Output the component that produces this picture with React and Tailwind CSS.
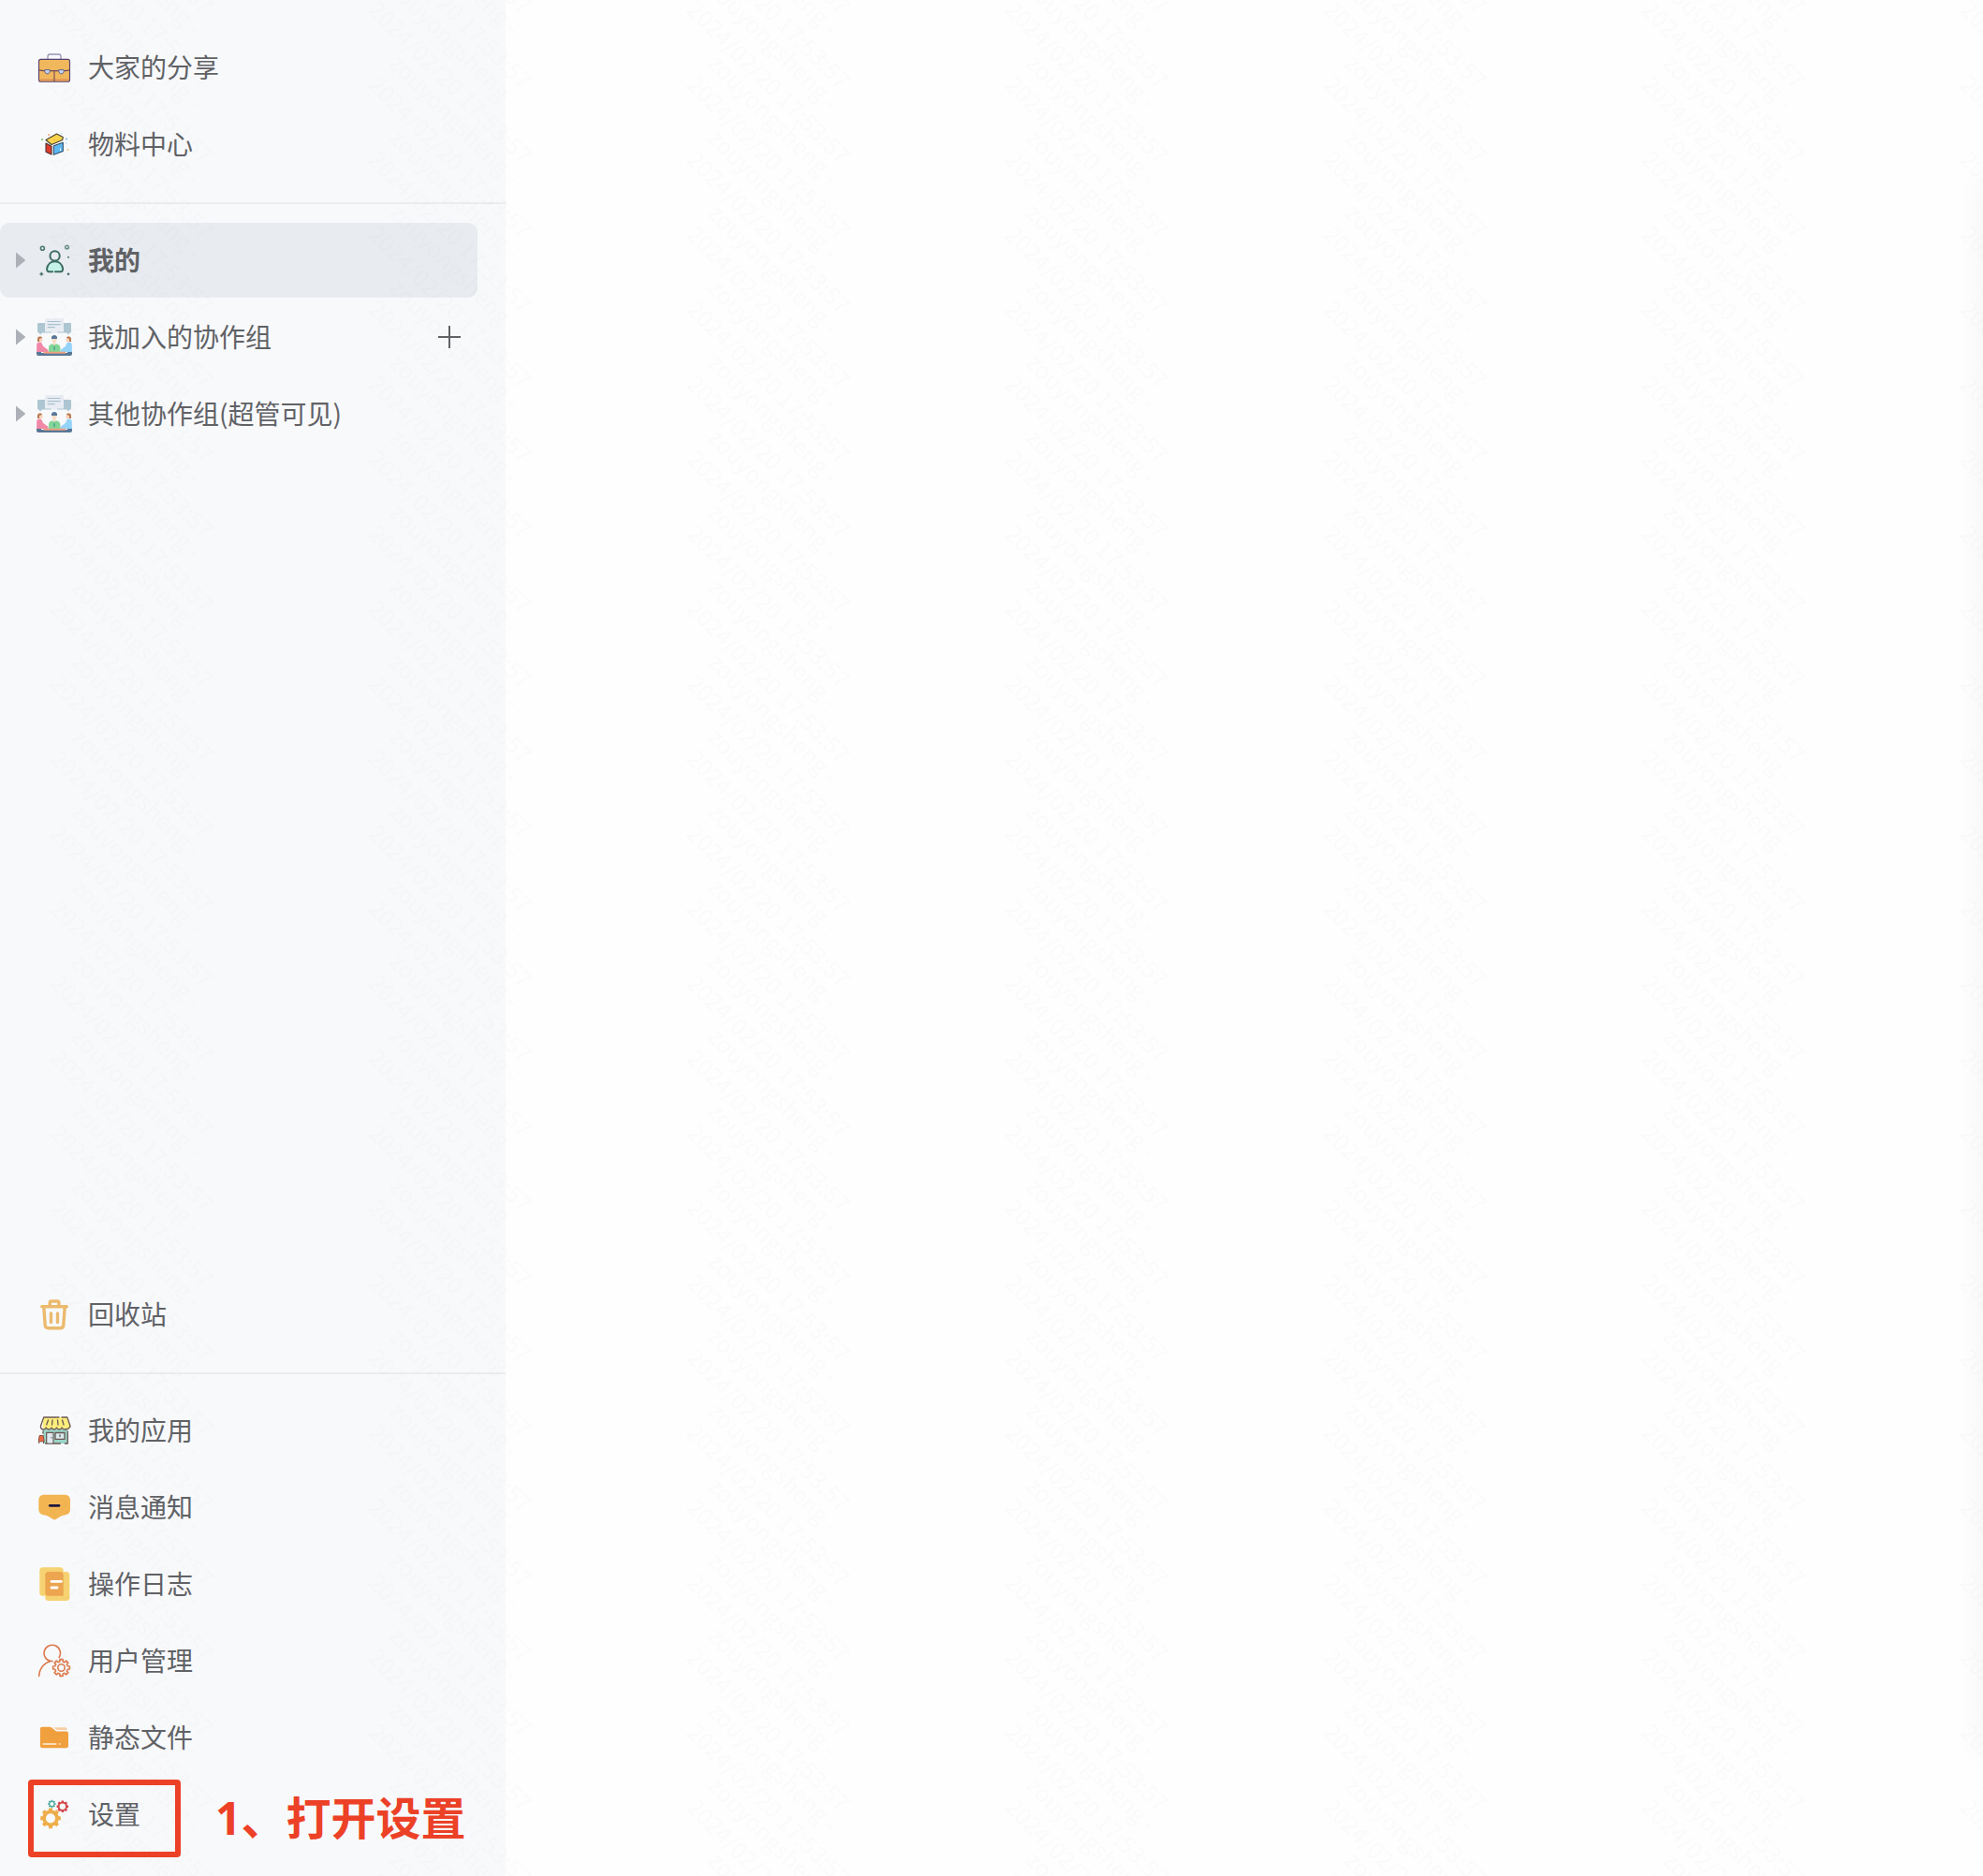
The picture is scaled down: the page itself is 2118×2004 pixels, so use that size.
import React from "react";

function gearPath(cx, cy, outer, inner, teeth) {
  const step = (Math.PI * 2) / teeth;
  const pts = [];
  for (let i = 0; i < teeth; i++) {
    const a = i * step - Math.PI / 2;
    [
      [inner, -0.32],
      [outer, -0.22],
      [outer, 0.22],
      [inner, 0.32],
    ].forEach(([r, k]) => {
      pts.push(`${(cx + r * Math.cos(a + k * step)).toFixed(2)} ${(cy + r * Math.sin(a + k * step)).toFixed(2)}`);
    });
  }
  return `M${pts.join("L")}Z`;
}

function ring(cx, cy, r) {
  return `M${cx - r} ${cy}a${r} ${r} 0 1 0 ${2 * r} 0a${r} ${r} 0 1 0 ${-2 * r} 0Z`;
}

function Icon({ children, shift = 0 }) {
  return (
    <svg viewBox={`0 ${-shift} 40 40`} className="size-10 shrink-0" fill="none" aria-hidden="true">
      {children}
    </svg>
  );
}

const Briefcase = () => (
  <Icon>
    <path d="M13 11V8.3a2.3 2.3 0 0 1 2.3-2.3h9.4a2.3 2.3 0 0 1 2.3 2.3V11" stroke="#9a92b8" strokeWidth="1.3" />
    <rect x="3.5" y="11.4" width="33" height="23.8" rx="2" fill="#f1b75c" stroke="#54406f" strokeWidth="1.1" />
    <path d="M4.3 33.4h31.4" stroke="#e08f56" strokeWidth="1.6" />
    <path d="M3.5 22.8c2 .8 4 .8 6 .8h21c2 0 4 0 6-.8M20 23.6V35" stroke="#6d4a5c" strokeWidth="1.1" />
    <path d="M9.8 22.6h5.4v2.2l-1.5 2h-2.4l-1.5-2ZM24.8 22.6h5.4v2.2l-1.5 2h-2.4l-1.5-2Z" fill="#c3d3ee" stroke="#5d5b82" strokeWidth=".9" />
  </Icon>
);

const Cube = () => (
  <Icon>
    <path d="M11 15.5 22.5 9l6.8 3.4-.6 3.2L17 20.5Z" fill="#f8d34c" stroke="#4a4030" strokeWidth="1.1" strokeLinejoin="round" />
    <path d="m11 19 6 3.2v8.8l-6-2.8Z" fill="#e23b2c" stroke="#4a3030" strokeWidth="1.1" strokeLinejoin="round" />
    <path d="m19.3 21.8 10-3.6v9.4l-10 3.6Z" fill="#5cb8f3" stroke="#34506a" strokeWidth="1.1" strokeLinejoin="round" />
    <path d="M26.5 24.5v2.5" stroke="#fff" strokeWidth="1" />
    <path d="M20 15v1" stroke="#d49a28" strokeWidth=".8" />
    <circle cx="7" cy="15" r="1" fill="#6fbf6a" />
    <circle cx="14.2" cy="10" r=".9" fill="#f0946a" />
    <circle cx="27.5" cy="8.8" r=".6" fill="#7fcf8a" />
    <circle cx="33" cy="14.5" r="1" fill="#7db9ee" />
    <circle cx="32.6" cy="19" r=".6" fill="#7db9ee" />
    <circle cx="34.5" cy="26" r="1" fill="#f5c070" />
    <circle cx="6.3" cy="24.5" r=".6" fill="#f3d98a" />
  </Icon>
);

const Mine = () => (
  <Icon>
    <path d="M14.5 32.2c-1.6 0-2.6-1.2-2.4-3 .6-4.8 4-8 8.5-8s7.9 3.2 8.5 8c.2 1.8-.8 3-2.400 3Z" fill="#c5f2e6" />
    <path d="M15.5 32.2h-1c-1.600 0-2.600-1.200-2.400-3 .6-4.800 4-8 8.500-8s7.900 3.200 8.500 8c.2 1.800-.8 3-2.400 3h-5.700M17 32.200h1.200" stroke="#3c6b62" strokeWidth="2" strokeLinecap="round" />
    <circle cx="20.6" cy="15.4" r="5.1" fill="#e8ebf0" stroke="#3c6b62" strokeWidth="2" />
    <circle cx="7.4" cy="7.3" r="2" stroke="#4b766e" strokeWidth="1.6" />
    <circle cx="33.5" cy="6" r="1.8" stroke="#6c8f89" strokeWidth="1.6" />
    <circle cx="35" cy="16.8" r="1" fill="#4b766e" />
    <path d="M6.3 32.800v3.800M4.400 34.700h3.800" stroke="#4b766e" strokeWidth="1.6" />
    <circle cx="35" cy="34.7" r="1.3" fill="#3c6b62" />
  </Icon>
);

const Team = () => (
  <Icon>
    <path d="M3 5h14v10.500H7L5 17.500l-1.500-2H3a1 1 0 0 1-1-1V6a1 1 0 0 1 1-1ZM23 5h14a1 1 0 0 1 1 1v8.500a1 1 0 0 1-1 1h-.5l-1.500 2-2-2H23Z" fill="#adc6d2" />
    <path d="M10 0h20v14.500h-6.500L20 16.500l-3.500-2H10Z" fill="#e9edf3" />
    <path d="M12.700 3.500h14M12.700 6.600h14M12.700 9.600h8" stroke="#a8c2cf" strokeWidth="1.1" />
    <path d="M1 35.500h38v2.500a2 2 0 0 1-2 2H3a2 2 0 0 1-2-2Z" fill="#587896" />
    <path d="M6 34h28v3H6Z" fill="#f6f8fb" />
    <path d="M1.200 36v-7.500c0-2 1.300-3 3-3 2 0 3 1.500 3.500 4l5.800 4.500v2H5Z" fill="#f088a8" />
    <path d="M38.800 36v-7.500c0-2-1.300-3-3-3-2 0-3 1.500-3.500 4L26.500 34v2H35Z" fill="#94d3f8" />
    <path d="M14 36v-4.500c0-2.500 2-4 4-4h4c2 0 4.400 1.500 4.400 4V36Z" fill="#82d596" />
    <path d="m20 28.500 1 3.500-1 3-1-3Z" fill="#4fa58e" />
    <path d="M8.500 35.700h23.500v2H8.500Z" fill="#f0a283" />
    <circle cx="5" cy="23" r="2.5" fill="#f9d2ba" />
    <circle cx="35" cy="23" r="2.5" fill="#f9d2ba" />
    <path d="M2 25v-3c0-2 1.500-2.500 3-2.500 1.200 0 2 .5 2 1.500l-3 1v3ZM38 25v-3c0-2-1.500-2.500-3-2.500-1.200 0-2 .5-2 1.500l3 1v3Z" fill="#b97a50" />
    <path d="M17.500 20.500h5v4l-1.300 1.500v2L20 29l-1.200-1v-2l-1.300-1.500Z" fill="#fbdcc4" />
    <path d="M17 22v-1.500c0-1.500 1.500-2.500 3-2.500s3 1 3 2.500V22Z" fill="#58789a" />
  </Icon>
);

const Trash = () => (
  <Icon>
    <g stroke="#ebba6d" strokeWidth="3.4" strokeLinecap="round" strokeLinejoin="round">
      <path d="M6.800 11.700h26.500" />
      <path d="M15.200 11V7.600A1.700 1.700 0 0 1 16.900 6h6.300A1.700 1.700 0 0 1 24.900 7.600V11" />
      <path d="m8.800 12 1.400 19.500a3.500 3.500 0 0 0 3.500 3.200h12.600a3.500 3.500 0 0 0 3.500-3.200L31.200 12" />
      <path d="M16.500 19v9.500M23.500 19v9.500" />
    </g>
  </Icon>
);

const Shop = () => (
  <Icon shift={1}>
    <path d="M8 18h26v15H8Z" fill="#9ad6c7" />
    <path d="M8.600 5h25.200l3.300 9.500c0 2.500-1.400 3.500-2.800 3.500s-2.400-.8-2.800-1.800c-.6 1.200-1.600 1.800-2.800 1.800s-2.200-.6-2.700-1.800c-.6 1.200-1.500 1.800-2.700 1.800s-2.200-.6-2.700-1.800c-.6 1.200-1.500 1.800-2.700 1.800s-2.200-.6-2.700-1.800c-.6 1.200-1.500 1.800-2.700 1.800-1.900 0-4.900-1-4.900-3.500Z" fill="#fbee7b" />
    <g stroke="#6b5653" strokeWidth="1.3" strokeLinecap="round" strokeLinejoin="round">
      <path d="M25 5H8.700L5.400 14.500c0 2.300 1.300 3.500 2.900 3.500s2.600-.8 3-2c.5 1.300 1.500 2 2.800 2s2.300-.7 2.800-2c.5 1.300 1.500 2 2.800 2s2.300-.7 2.800-2c.5 1.300 1.500 2 2.800 2s2.300-.7 2.800-2c.5 1.300 1.500 2 2.900 2 1.800 0 5-.8 6.100-3.500L33.800 5H28" />
      <path d="m13.500 8-1.800 5M18 8l-.5 5M23.500 8l.5 5M28.500 8l1.500 5" />
      <path d="M8 20v2M34.300 20v13h-3M11.700 33V21.500h7.200V33ZM10.500 33h16" />
      <path d="M21 21.500h10v6.800H21Z" fill="#d9ecee" />
      <path d="M26 24v1.500" />
    </g>
    <path d="M12.500 22h5.800v10.500h-5.800Z" fill="#e3e9f0" />
    <path d="M17 26v1.500" stroke="#6b5653" strokeWidth="1" />
    <path d="M4.200 24.500h4l1 6.300h-6Z" fill="#ea6c45" stroke="#8b4c3e" strokeWidth="1" strokeLinejoin="round" />
    <path d="M3.700 31v2M8.500 31v2" stroke="#6b5653" strokeWidth="1.1" />
  </Icon>
);

const Message = () => (
  <Icon shift={1}>
    <path d="M9 5.700h22c4 0 6 2.500 6 6v9.300c0 3.500-1.500 5.500-5 6.300-2.500.5-4 .7-6 2l-4 2.500c-1.300.8-2.300.8-3.600 0l-4-2.500c-2-1.300-3.500-1.500-6-2-3.500-.8-5.100-2.800-5.100-6.300v-9.300c0-3.500 2-6 5.700-6Z" fill="#f2b552" />
    <path d="M15.300 17.300h9.700" stroke="#1e173f" strokeWidth="2.7" strokeLinecap="round" />
  </Icon>
);

const Log = () => (
  <Icon shift={1}>
    <rect x="4.3" y="1.3" width="25.4" height="30.4" rx="3.5" fill="#f7d272" />
    <rect x="10.3" y="6" width="26" height="31" rx="3.5" fill="#f7d272" />
    <path d="M13.800 6h12.400a3.500 3.500 0 0 1 3.500 3.500v22.200H13.800a3.500 3.500 0 0 1-3.500-3.500V9.500A3.500 3.500 0 0 1 13.800 6Z" fill="#eda550" />
    <path d="M17 16.300h10.500M17 23h6" stroke="#fff" strokeWidth="2.8" strokeLinecap="round" />
  </Icon>
);

const UserGear = () => (
  <Icon shift={1}>
    <g stroke="#dc7a4c" strokeWidth="1.6" strokeLinecap="round" strokeLinejoin="round">
      <path d="M25.200 15.500a8.700 8.700 0 1 0-9.200 4C9 21.500 3.900 27.500 3.700 35.500M16 19.500h2" />
      <path d={gearPath(27.5, 26.5, 9, 6.8, 8)} />
      <circle cx="27.5" cy="26.5" r="3.7" />
    </g>
  </Icon>
);

const Folder = () => (
  <Icon shift={1}>
    <path d="M19 8.200h12a2.500 2.500 0 0 1 2.500 2.800H23Z" fill="#f8cfa2" />
    <path d="M7 7.700h8.200c.8 0 1.500.3 2 .8l4.300 3.500c.4.300 1 .5 1.500.5h10a2 2 0 0 1 2 2V28a2.200 2.200 0 0 1-2.200 2.200H7A2.200 2.200 0 0 1 4.900 28V9.900A2.200 2.200 0 0 1 7 7.700Z" fill="#f1a03e" />
    <path d="M8.500 26h13" stroke="#fbdcb8" strokeWidth="2" strokeLinecap="round" />
    <circle cx="25.7" cy="26" r="1.1" fill="#fbdcb8" />
  </Icon>
);

const Gears = () => (
  <Icon>
    <path fillRule="evenodd" d={gearPath(16, 24.3, 11, 8.8, 8) + ring(16, 24.3, 5.1)} fill="#efae4b" />
    <path fillRule="evenodd" d={gearPath(28.8, 11.7, 6.4, 5.2, 8) + ring(28.8, 11.7, 3.2)} fill="#d2484a" />
    <path fillRule="evenodd" d={gearPath(17.4, 9, 4.4, 3.4, 8) + ring(17.4, 9, 2.1)} fill="#4bab9f" />
  </Icon>
);

function Row({ icon, label, arrow, active, children }) {
  return (
    <li className={`relative mr-[30px] mb-0.5 flex h-20 items-center rounded-[10px] ${active ? "bg-[#e8ebf0]" : ""}`}>
      <button
        type="button"
        className={`flex h-full min-w-0 grow items-center text-left ${active ? "font-bold" : ""}`}
      >
        <span className="flex w-[38px] shrink-0 pl-[17px]">
          {arrow && (
            <svg viewBox="0 0 10 18" className="h-[18px] w-2.5" aria-hidden="true">
              <path d="M0 .5 9.500 8.200a1 1 0 0 1 0 1.600L0 17.500Z" fill="#adb0b6" />
            </svg>
          )}
        </span>
        {icon}
        <span className="ml-4 pb-0.5 whitespace-nowrap">{label}</span>
      </button>
      {children}
    </li>
  );
}

function Watermark() {
  return (
    <svg className="pointer-events-none absolute inset-0 h-full w-full" aria-hidden="true">
      <defs>
        <pattern id="mark" width="340" height="80" patternUnits="userSpaceOnUse" x="52" y="0">
          {[-240, -160, -80, 0, 80].map((y) => (
            <g key={y} transform={`translate(0 ${y + 12}) rotate(45)`} fontSize="25">
              <text x="0" y="0">2024/02/20 17:53:57</text>
              <text x="0" y="-32">zouyongsheng -</text>
            </g>
          ))}
        </pattern>
      </defs>
      <rect
        width="100%"
        height="100%"
        fill="url(#mark)"
        className="font-[Inter,'Noto_Sans',sans-serif] opacity-[0.014]"
      />
    </svg>
  );
}

export default function App() {
  return (
    <div className="relative flex min-h-screen overflow-hidden bg-[#fefefe] font-['Noto_Sans_CJK_SC','Noto_Sans',sans-serif] text-[28px] leading-10 text-[#606266]">
      <aside className="flex w-[540px] shrink-0 flex-col bg-[#f8f9fb] pt-8 pb-6">
        <ul>
          <Row icon={<Briefcase />} label="大家的分享" />
          <Row icon={<Cube />} label="物料中心" />
        </ul>
        <hr className="my-5 border-t-2 border-[#ebecef]" />
        <ul>
          <Row icon={<Mine />} label="我的" arrow active />
          <Row icon={<Team />} label="我加入的协作组" arrow>
            <button type="button" aria-label="新建协作组" className="mr-[18px] flex size-6 items-center justify-center">
              <svg viewBox="0 0 24 24" className="size-6" fill="none" stroke="#606266" strokeWidth="2" aria-hidden="true">
                <path d="M0 12h24M12 0v24" />
              </svg>
            </button>
          </Row>
          <Row icon={<Team />} label="其他协作组(超管可见)" arrow />
        </ul>
        <div className="grow" />
        <ul>
          <Row icon={<Trash />} label="回收站" />
        </ul>
        <hr className="my-5 border-t-2 border-[#ebecef]" />
        <ul>
          <Row icon={<Shop />} label="我的应用" />
          <Row icon={<Message />} label="消息通知" />
          <Row icon={<Log />} label="操作日志" />
          <Row icon={<UserGear />} label="用户管理" />
          <Row icon={<Folder />} label="静态文件" />
          <Row icon={<Gears />} label="设置">
            <span className="pointer-events-none absolute top-[3px] left-[30px] h-[83px] w-[163px] rounded-[4px] border-6 border-[#ec4127]" />
            <span className="pointer-events-none absolute top-3 left-[230px] font-['Open_Sans','Noto_Sans_CJK_SC',sans-serif] text-5xl leading-[64px] font-bold whitespace-nowrap text-[#ec4127]">
              1、打开设置
            </span>
          </Row>
        </ul>
      </aside>
      <main className="relative min-w-0 grow">
        <div className="absolute top-48 bottom-32 left-full w-10 shadow-[0_0_32px_rgba(0,0,0,0.05)]" />
      </main>
      <Watermark />
    </div>
  );
}
